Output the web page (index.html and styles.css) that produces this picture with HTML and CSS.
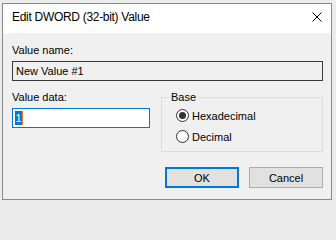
FILE: index.html
```html
<!DOCTYPE html>
<html>
<head>
<meta charset="utf-8">
<link rel="stylesheet" href="styles.css">
</head>
<body>
<div class="desk">
  <div class="window">
    <div class="titlebar">
      <span class="title">Edit DWORD (32-bit) Value</span>
      <svg class="close" width="10" height="10" viewBox="0 0 10 10"><path d="M0.5 0.5 L9.5 9.5 M9.5 0.5 L0.5 9.5" stroke="#000" stroke-width="1" fill="none"/></svg>
    </div>
    <div class="content">
      <div class="label first">Value name:</div>
      <div class="field readonly">New Value #1</div>
      <div class="row">
        <div class="col-left">
          <div class="label">Value data:</div>
          <div class="field edit"><span class="sel">1</span><span class="caret"></span></div>
        </div>
        <fieldset class="group">
          <legend>Base</legend>
          <div class="radio-row"><span class="radio checked"></span><span class="rlabel">Hexadecimal</span></div>
          <div class="radio-row"><span class="radio"></span><span class="rlabel">Decimal</span></div>
        </fieldset>
      </div>
      <div class="buttons">
        <div class="btn default">OK</div>
        <div class="btn">Cancel</div>
      </div>
    </div>
  </div>
</div>
</body>
</html>
```

FILE: styles.css
```css
* { box-sizing: border-box; }
html, body { margin: 0; padding: 0; }
body {
  width: 336px;
  height: 204px;
  overflow: hidden;
  background: #ececec;
  font-family: "Liberation Sans", Arial, sans-serif;
  font-size: 11px;
  color: #000;
}
.desk {
  padding: 3px 0 0 2px;
}
.window {
  width: 330px;
  height: 197px;
  border: 1px solid #8a8a8a;
  background: #f0f0f0;
  display: flex;
  flex-direction: column;
}
.titlebar {
  height: 29px;
  background: #fff;
  display: flex;
  justify-content: space-between;
  align-items: flex-start;
  padding: 0 9px 0 9px;
}
.title {
  margin-top: 6px;
  font-size: 12px;
  line-height: 15px;
  letter-spacing: -0.3px;
}
.close {
  margin-top: 8px;
  display: block;
}
.content {
  padding: 0 8px 0 9px;
  display: flex;
  flex-direction: column;
}
.label {
  line-height: 15px;
}
.label.first {
  margin-top: 10px;
}
.field {
  margin-top: 3px;
  height: 20px;
  line-height: 18px;
  padding-left: 3px;
}
.readonly {
  border: 1px solid #3a3a3a;
  background: #f0f0f0;
}
.row {
  margin-top: 9px;
  display: flex;
  align-items: flex-start;
}
.col-left {
  width: 138px;
  display: flex;
  flex-direction: column;
}
.edit {
  border: 1px solid #0078d7;
  background: #fff;
  padding-left: 2px;
  display: flex;
  align-items: center;
}
.sel {
  background: #0078d7;
  color: #fff;
  line-height: 14px;
  padding: 0 0.5px;
}
.caret {
  width: 1px;
  height: 14px;
  background: #f47a20;
}
.group {
  margin: 0 0 0 11px;
  width: 162px;
  height: 62px;
  border: 1px solid #dcdcdc;
  padding: 0 0 0 14px;
}
.group legend {
  margin-left: -7px;
  padding: 0 2px;
  line-height: 15px;
}
.radio-row {
  height: 21px;
  display: flex;
  align-items: center;
}
.radio {
  width: 13px;
  height: 13px;
  border: 1px solid #333;
  border-radius: 50%;
  background: #fff;
  display: flex;
  align-items: center;
  justify-content: center;
}
.radio.checked::after {
  content: "";
  width: 7px;
  height: 7px;
  border-radius: 50%;
  background: #333;
}
.rlabel {
  margin-left: 3px;
}
.buttons {
  margin-top: 15px;
  display: flex;
  justify-content: flex-end;
  gap: 10px;
}
.btn {
  width: 74px;
  height: 21px;
  border: 1px solid #adadad;
  background: #e1e1e1;
  display: flex;
  align-items: center;
  justify-content: center;
}
.btn.default {
  border: 2px solid #0078d7;
}
```
